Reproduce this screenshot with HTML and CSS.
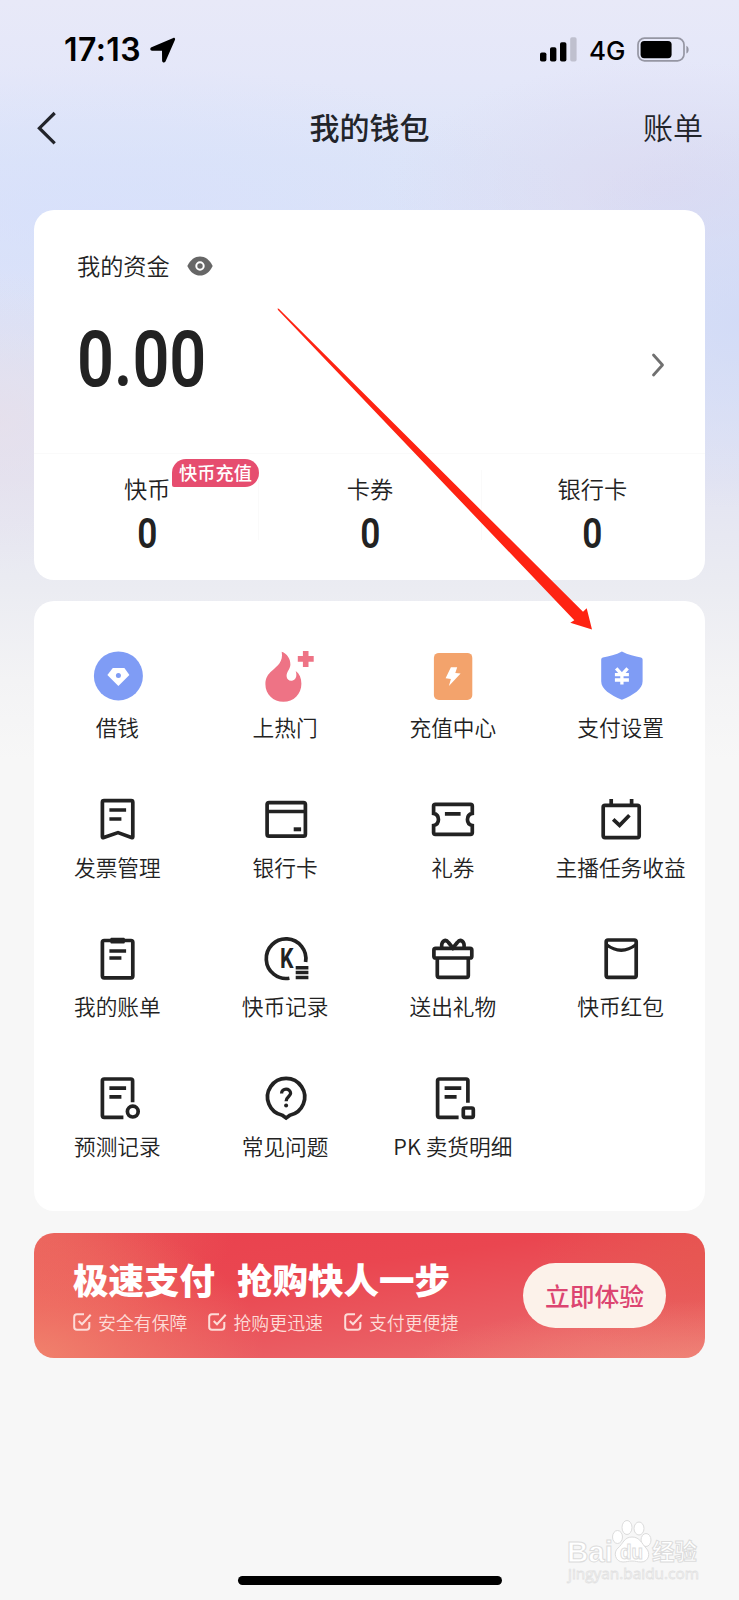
FILE: index.html
```html
<!DOCTYPE html>
<html lang="zh-CN">
<head>
<meta charset="utf-8">
<title>我的钱包</title>
<link rel="stylesheet" href="styles.css">
</head>
<body>
<div class="screen">
  <div class="status">
    <span class="time">17:13</span>
    <svg class="locate" width="26" height="26" viewBox="0 0 26 26"><path d="M23.300 .9 1.500 10.200c-1.900.9-1.400 3.400.6 3.500l9.900.1.1 9.900c.1 2 2.700 2.500 3.500.6L25 2.700c.5-1.200-.6-2.300-1.700-1.800z"/></svg>
    <span class="spacer"></span>
    <svg class="signal" width="37" height="25" viewBox="0 0 37 25"><rect x="0" y="15.500" width="6.400" height="9" rx="1.800"/><rect x="10" y="10.300" width="6.400" height="14.200" rx="1.800"/><rect x="20" y="5.300" width="6.400" height="19.200" rx="1.800"/><rect x="30.200" y="0.200" width="6.400" height="24.300" rx="1.800" fill="#bfc0ce"/></svg>
    <span class="net">4G</span>
    <svg class="battery" width="53" height="26" viewBox="0 0 53 26"><rect x="1" y="1.200" width="46" height="22.600" rx="6.500" fill="none" stroke="#9596a3" stroke-width="1.700"/><rect x="3.600" y="3.900" width="31" height="17.300" rx="3.600"/><path d="M49.400 8.700c3 1.300 3 6.600 0 7.900z" fill="#9596a3"/></svg>
  </div>
  <header class="nav">
    <svg class="back" width="20" height="34" viewBox="0 0 20 34"><path d="M17.700 2 2.400 17.200 17.700 32.400" fill="none" stroke="#22242a" stroke-width="3.200"/></svg>
    <h1>我的钱包</h1>
    <a class="bill">账单</a>
  </header>

  <section class="card funds">
    <div class="funds-head"><span>我的资金</span>
      <svg width="26" height="20" viewBox="0 0 26 20"><path d="M.3 10C3.500 3.500 8 .4 13 .4S22.500 3.500 25.700 10C22.500 16.500 18 19.600 13 19.600S3.500 16.500.3 10z" fill="#666"/><circle cx="13" cy="10" r="3.700" fill="none" stroke="#fff" stroke-width="2"/></svg>
    </div>
    <div class="balance">
      <span class="amount">0.00</span>
      <svg width="14" height="24" viewBox="0 0 14 24"><path d="M2.500 2 11.500 12 2.500 22" fill="none" stroke="#707070" stroke-width="2.800" stroke-linecap="round" stroke-linejoin="round"/></svg>
    </div>
    <div class="stats">
      <div class="stat"><span class="stat-name">快币<em class="tag">快币充值</em></span><b>0</b></div>
      <div class="stat"><span class="stat-name">卡券</span><b>0</b></div>
      <div class="stat"><span class="stat-name">银行卡</span><b>0</b></div>
    </div>
  </section>

  <section class="card grid">
    <div class="item"><svg viewBox="0 0 60 60"><circle cx="30.400" cy="27.900" r="24.500" fill="#7f9cf5"/><path d="M24.800 19.900H36.400L41.400 26.900 30.400 37.900 19.400 26.900z" fill="#fff"/><circle cx="30.400" cy="27.600" r="2.500" fill="#7f9cf5"/></svg><span>借钱</span></div>
    <div class="item"><svg viewBox="0 0 60 60"><path fill="#ee7385" d="M25.700 3.800C31 5.700 34.500 10.700 34.400 16.700 34.200 21.200 30.400 23.700 30.600 28.200c.2 3 2.400 4.800 4.900 4.600C39.500 32.400 41.500 28.700 39.700 23.100 43.500 25.700 45.400 30.200 45.400 35.700 45.400 46.200 37.500 53.800 27.400 53.800S9.400 46.200 9.400 36.200C9.400 29.700 12 26.200 16 22.700 21.500 18 27.500 13.700 25.700 3.800z"/><path d="M41.800 10.900h15.900M49.700 3v15.900" stroke="#ee7385" stroke-width="5.600"/></svg><span>上热门</span></div>
    <div class="item"><svg viewBox="0 0 60 60"><rect x="10.900" y="4.900" width="38.400" height="47" rx="5" fill="#f3a36c"/><path d="M27.900 19.200H34.200L32.300 24.900 37.600 25.500 25.900 37.900 27.900 30.900 22.600 30.300z" fill="#fff"/></svg><span>充值中心</span></div>
    <div class="item"><svg viewBox="0 0 60 60"><path d="M30.900 3.500C37 7 44 8.200 50 9.500q1.600.4 1.600 2V33.200c0 8-9 13.500-20.700 18.600C19.200 46.700 10.200 41.200 10.200 33.200V11.500q0-1.600 1.600-2C18 8.200 25 7 30.900 3.500z" fill="#7f9cf5"/><path d="M25.200 20.300 30.900 26.600 36.600 20.300M23.900 26.600H37.900M23.900 32H37.900M30.900 26.300V36.500" fill="none" stroke="#fff" stroke-width="3.300"/></svg><span>支付设置</span></div>

    <div class="item"><svg class="line" viewBox="0 0 60 60"><path d="M16 12.600H43.200q1.600 0 1.600 1.600V48.700q0 1.400-1.400.9L30 44.600 15.800 49.600q-1.400.5-1.400-.9V14.200q0-1.600 1.600-1.600zM21.400 22H38.100M21.400 31H33.400"/></svg><span>发票管理</span></div>
    <div class="item"><svg class="line" viewBox="0 0 60 60"><rect x="11.100" y="14.600" width="38.300" height="33.600" rx="2"/><path d="M11 23.500H49.400"/><path d="M37.700 41.300h7.400" stroke-width="4"/></svg><span>银行卡</span></div>
    <div class="item"><svg class="line" viewBox="0 0 60 60"><path d="M12.400 16.300H47.500q1.800 0 1.800 1.800V25.400A6.200 6.200 0 0 0 49.300 37.500V44.500q0 1.800-1.800 1.800H12.400q-1.800 0-1.800-1.800V37.500A6.200 6.200 0 0 0 10.600 25.400V18.100q0-1.800 1.800-1.800zM21.900 25.800H37.600"/></svg><span>礼券</span></div>
    <div class="item"><svg class="line" viewBox="0 0 60 60"><rect x="12.200" y="17.300" width="36" height="32.300" rx="1.800"/><path d="M20.200 11v6M40.600 11v6M22.200 31.300 28.600 37.300 38.400 27.300"/></svg><span>主播任务收益</span></div>

    <div class="item"><svg class="line" viewBox="0 0 60 60"><rect x="14.400" y="13.500" width="30.400" height="37.300" rx="1.800"/><rect x="22.400" y="10.700" width="14.400" height="5.700" rx="1" fill="#222" stroke="none"/><path d="M21.400 24H38.100M21.400 31H33.400"/></svg><span>我的账单</span></div>
    <div class="item"><svg class="line" viewBox="0 0 60 60"><path d="M49.600 35A19.800 19.800 0 1 0 33.400 51.200"/><path d="M39.700 40.700H52.400M39.700 45.600H52.400M39.700 50.500H52.400" stroke-width="3.500"/><text x="24" y="41" textLength="13.500" lengthAdjust="spacingAndGlyphs" class="coin">K</text></svg><span>快币记录</span></div>
    <div class="item"><svg class="line" viewBox="0 0 60 60"><rect x="10.900" y="21.300" width="37.900" height="9.700" rx="1.800"/><path d="M14.300 31V48.600q0 1.800 1.800 1.800H43.500q1.800 0 1.800-1.800V31M18.800 21C17.800 14 22.500 11.500 25.500 15.500L29.900 21 34.300 15.500C37.300 11.500 42 14 41 21"/></svg><span>送出礼物</span></div>
    <div class="item"><svg class="line" viewBox="0 0 60 60"><rect x="15.200" y="13" width="30" height="37.400" rx="1.800"/><path d="M15.200 17.500Q30.200 29 45.200 17.500" stroke-width="3.200"/></svg><span>快币红包</span></div>

    <div class="item"><svg class="line" viewBox="0 0 60 60"><path d="M44.600 35.300V13.800q0-1.800-1.800-1.800H16.200q-1.800 0-1.800 1.800V48.500q0 1.800 1.800 1.800H35.400M21.400 21.200H38.100M21.400 29.800H33.400"/><circle cx="44.800" cy="44.600" r="5.400"/></svg><span>预测记录</span></div>
    <div class="item"><svg class="line" viewBox="0 0 60 60"><path d="M26.300 48.200A18.600 18.600 0 1 1 33.900 48.200L30.100 51z"/><path d="M25.600 26.500C25.400 20.800 34.600 20.800 34.600 26.300 34.600 29.500 30.100 29.500 30.100 34.300" stroke-width="3.300"/><circle cx="30.100" cy="38.400" r="2" fill="#222" stroke="none"/></svg><span>常见问题</span></div>
    <div class="item"><svg class="line" viewBox="0 0 60 60"><path d="M44.900 35.800V13.800q0-1.800-1.800-1.800H16.400q-1.800 0-1.800 1.800V48.500q0 1.800 1.800 1.800H35.600M21.600 21.200H38.300M21.600 29.800H33.600"/><rect x="40.300" y="41" width="10" height="9.300" rx="1.500"/></svg><span>PK 卖货明细</span></div>
  </section>

  <section class="banner">
    <div class="pitch">
      <h2><span>极速支付</span><span>抢购快人一步</span></h2>
      <ul>
        <li><svg width="19" height="18" viewBox="0 0 19 18"><path d="M11 1.200H4Q1.200 1.200 1.200 4V14Q1.200 16.800 4 16.800H13.500Q16.300 16.800 16.300 14V9M5.700 8 9 11.200 17.700 1.800"/></svg>安全有保障</li>
        <li><svg width="19" height="18" viewBox="0 0 19 18"><path d="M11 1.200H4Q1.200 1.200 1.200 4V14Q1.200 16.800 4 16.800H13.500Q16.300 16.800 16.300 14V9M5.700 8 9 11.200 17.700 1.800"/></svg>抢购更迅速</li>
        <li><svg width="19" height="18" viewBox="0 0 19 18"><path d="M11 1.200H4Q1.200 1.200 1.200 4V14Q1.200 16.800 4 16.800H13.500Q16.300 16.800 16.300 14V9M5.700 8 9 11.200 17.700 1.800"/></svg>支付更便捷</li>
      </ul>
    </div>
    <a class="try">立即体验</a>
  </section>

  <svg class="pointer" width="739" height="700" viewBox="0 0 739 700"><path d="M277.500 308.500 278.800 308.800 583 611.800 586.700 608.300 592 629.500 570.300 622.800 574.300 620.200 278 310z" fill="#fe2312"/></svg>

  <svg class="watermark" width="140" height="72" viewBox="0 0 140 72">
    <g fill="#fff" stroke="#dcdcdc" stroke-width="1">
      <text x="5" y="43" class="wm-name" textLength="46" lengthAdjust="spacingAndGlyphs">Bai</text>
      <ellipse cx="55.500" cy="18" rx="5" ry="6.500"/><ellipse cx="65" cy="8.500" rx="5" ry="7"/><ellipse cx="77" cy="9.500" rx="5" ry="6.500"/><ellipse cx="84" cy="21" rx="5" ry="6.500"/>
      <path d="M70 18c-8 0-9 7-14 11-5 4-3 14 5 14 4 0 5-1 9-1s5 1 9 1c8 0 10-9 5-14-4-4-6-11-14-11z"/>
      <text x="58" y="40" class="wm-du" textLength="23" lengthAdjust="spacingAndGlyphs">du</text>
      <text x="90" y="41" class="wm-cn" textLength="45" lengthAdjust="spacingAndGlyphs">经验</text>
    </g>
    <text x="6" y="60" class="wm-url" textLength="131" lengthAdjust="spacingAndGlyphs">jingyan.baidu.com</text>
  </svg>
  <div class="home-bar"></div>
</div>
</body>
</html>
```

FILE: styles.css
```css
* { box-sizing: border-box; margin: 0; padding: 0; }
body { background: #f7f7f7; }
.screen {
  position: relative;
  width: 739px;
  height: 1600px;
  overflow: hidden;
  padding: 0 34px;
  color: #222;
  font-family: "Noto Sans CJK SC", sans-serif;
  font-weight: 350;
  background:
    radial-gradient(ellipse 200px 190px at 739px 320px, rgba(209,218,246,.85), rgba(209,218,246,0)),
    radial-gradient(ellipse 280px 130px at 670px 190px, rgba(221,215,239,.7), rgba(221,215,239,0)),
    radial-gradient(ellipse 150px 150px at 0 420px, rgba(232,222,232,.65), rgba(232,222,232,0)),
    radial-gradient(ellipse 480px 150px at 100px 215px, rgba(214,223,252,.7), rgba(214,223,252,0)),
    linear-gradient(180deg, #e8e9f8 0, #e4e7f9 80px, #dde5f8 160px, #dbe2f7 330px, #e3e4f2 480px, #ebecf2 590px, #f3f3f5 680px, #f7f7f7 760px);
}
.status { display: flex; align-items: center; height: 98px; padding: 1px 15px 0 30px; }
.time { width: 86px; font: 600 32px/40px Inter, sans-serif; letter-spacing: .4px; color: #000; }
.spacer { flex: 1; }
.signal { margin-right: 12px; }
.net { width: 48px; padding-top: 2px; font: 500 26px/40px Inter, sans-serif; color: #000; }
.battery { flex: none; }
.nav { display: grid; grid-template-columns: 1fr auto 1fr; align-items: center; height: 60px; padding: 0 2px 0 3px; color: #22242a; }
.nav h1 { margin: -4px 1px 0 0; font-size: 30px; line-height: 44px; font-weight: 500; }
.bill { justify-self: end; margin-top: -4px; font-size: 30px; line-height: 44px; }
.card { background: #fff; border-radius: 20px; }
.funds { height: 370px; margin-top: 52px; }
.funds-head { display: flex; align-items: center; gap: 17px; height: 112px; padding: 0 43px; font-size: 23.200px; }
.funds-head span { margin-top: -3px; }
.balance { display: flex; align-items: flex-start; justify-content: space-between; height: 131px; padding: 0 40px 0 43px; }
.balance svg { margin-top: 31px; }
.amount { font: 600 78px/90px Roboto, sans-serif; transform: scaleX(.83); transform-origin: 0 50%; margin-top: -7px; }
.stats { display: grid; grid-template-columns: repeat(3, 1fr); height: 127px; padding: 16px 2px 0; border-top: 1px solid #fafafa; }
.stat { display: flex; flex-direction: column; align-items: center; }
.stat + .stat { border-left: 1px solid #fafafa; height: 70px; }
.stat-name { position: relative; flex: none; height: 38px; font-size: 23.200px; line-height: 36px; }
.stat b { flex: none; font: 600 43px/50px Roboto, sans-serif; transform: scaleX(.82); }
.tag { position: absolute; left: 48px; top: -11px; width: 87px; height: 28px; border-radius: 14px 14px 14px 2px; background: #e64d6f; color: #fff; font: 500 18.200px/27px "Noto Sans CJK SC", sans-serif; text-align: center; white-space: nowrap; }
.grid { display: grid; grid-template-columns: repeat(4, 1fr); grid-auto-rows: 95px; row-gap: 44.400px; height: 610px; margin-top: 21px; padding-top: 47.400px; }
.item { display: flex; flex-direction: column; align-items: center; gap: 4px; }
.item svg { width: 60px; height: 60px; flex: none; }
.item span { margin-left: -1px; font-size: 21.700px; line-height: 30px; white-space: nowrap; }
.line { fill: none; stroke: #222; stroke-width: 3.700; }
.coin { font: 700 27px Roboto, sans-serif; fill: #222; stroke: none; }
.banner { display: flex; justify-content: space-between; align-items: center; height: 125px; margin-top: 22px; padding: 0 39px; border-radius: 20px;
  background:
    radial-gradient(ellipse 230px 150px at 0 100%, rgba(241,134,110,.9), rgba(241,134,110,0)),
    radial-gradient(ellipse 300px 70px at 100% 110%, rgba(240,138,122,.8), rgba(240,138,122,0)),
    radial-gradient(ellipse 170px 110px at 100% 20%, rgba(230,88,80,.8), rgba(230,88,80,0)),
    radial-gradient(ellipse 200px 90px at 0 0, rgba(235,105,95,.8), rgba(235,105,95,0)),
    linear-gradient(172deg, #e9414e 0, #ea4650 35%, #ea5c62 70%, #ed7371 100%); }
.pitch h2 { display: flex; gap: 22px; font-size: 35.500px; line-height: 46px; font-weight: 900; color: #fff; }
.pitch ul { display: flex; gap: 21px; margin-top: 7px; list-style: none; }
.pitch li { display: flex; align-items: center; gap: 6px; font-size: 17.900px; line-height: 26px; color: #fddcd8; }
.pitch li svg { fill: none; stroke: #fddcd8; stroke-width: 2; }
.try { width: 143px; height: 65px; border-radius: 33px; background: #fcf2ea; color: #dc4571; font-size: 24.800px; line-height: 64px; font-weight: 500; text-align: center; }
.pointer { position: absolute; left: 0; top: 0; }
.watermark { position: absolute; left: 562px; top: 1519px; }
.wm-name { font: 700 30px "Liberation Sans", sans-serif; }
.wm-du { font: 700 21px "Liberation Sans", sans-serif; }
.wm-cn { font: 700 23px "Noto Sans CJK SC", sans-serif; }
.wm-url { font: 400 15px "Open Sans", sans-serif; fill: #fff; stroke: #e2e2e2; stroke-width: .8; }
.home-bar { position: absolute; left: 238px; bottom: 15px; width: 264px; height: 9px; border-radius: 5px; background: #000; }
```
